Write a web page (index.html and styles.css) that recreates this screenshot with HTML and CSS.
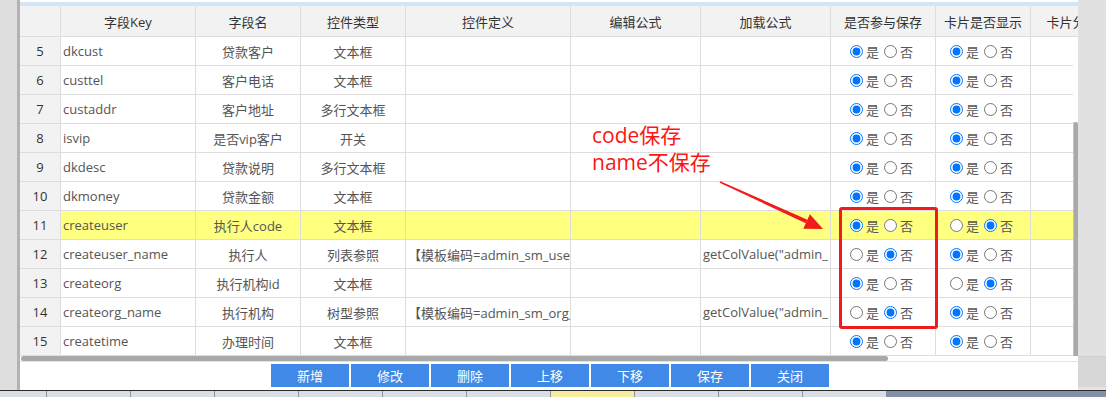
FILE: index.html
```html
<!DOCTYPE html>
<html lang="zh-CN">
<head>
    <meta charset="UTF-8">
    <title>字段设置</title>
    <link rel="stylesheet" href="styles.css">
</head>
<body>
    <div class="screen">
        <div class="side-left"></div>
        <div class="panel">
            <div class="top-band"></div>
            <div class="grid head">
                <div class="cell num"></div>
                <div class="cell">字段Key</div>
                <div class="cell">字段名</div>
                <div class="cell">控件类型</div>
                <div class="cell">控件定义</div>
                <div class="cell">编辑公式</div>
                <div class="cell">加载公式</div>
                <div class="cell">是否参与保存</div>
                <div class="cell">卡片是否显示</div>
                <div class="cell">卡片分组</div>
            </div>
            <div class="body">
                <div class="rows">
                    <div class="grid row">
                        <div class="cell num">5</div>
                        <div class="cell left">dkcust</div>
                        <div class="cell">贷款客户</div>
                        <div class="cell">文本框</div>
                        <div class="cell left"></div>
                        <div class="cell"></div>
                        <div class="cell left"></div>
                        <div class="cell opt"><input type="radio" name="s5" checked><span>是</span><input type="radio" name="s5"><span>否</span></div>
                        <div class="cell opt"><input type="radio" name="c5" checked><span>是</span><input type="radio" name="c5"><span>否</span></div>
                        <div class="cell"></div>
                    </div>
                    <div class="grid row">
                        <div class="cell num">6</div>
                        <div class="cell left">custtel</div>
                        <div class="cell">客户电话</div>
                        <div class="cell">文本框</div>
                        <div class="cell left"></div>
                        <div class="cell"></div>
                        <div class="cell left"></div>
                        <div class="cell opt"><input type="radio" name="s6" checked><span>是</span><input type="radio" name="s6"><span>否</span></div>
                        <div class="cell opt"><input type="radio" name="c6" checked><span>是</span><input type="radio" name="c6"><span>否</span></div>
                        <div class="cell"></div>
                    </div>
                    <div class="grid row">
                        <div class="cell num">7</div>
                        <div class="cell left">custaddr</div>
                        <div class="cell">客户地址</div>
                        <div class="cell">多行文本框</div>
                        <div class="cell left"></div>
                        <div class="cell"></div>
                        <div class="cell left"></div>
                        <div class="cell opt"><input type="radio" name="s7" checked><span>是</span><input type="radio" name="s7"><span>否</span></div>
                        <div class="cell opt"><input type="radio" name="c7" checked><span>是</span><input type="radio" name="c7"><span>否</span></div>
                        <div class="cell"></div>
                    </div>
                    <div class="grid row">
                        <div class="cell num">8</div>
                        <div class="cell left">isvip</div>
                        <div class="cell">是否vip客户</div>
                        <div class="cell">开关</div>
                        <div class="cell left"></div>
                        <div class="cell"></div>
                        <div class="cell left"></div>
                        <div class="cell opt"><input type="radio" name="s8" checked><span>是</span><input type="radio" name="s8"><span>否</span></div>
                        <div class="cell opt"><input type="radio" name="c8" checked><span>是</span><input type="radio" name="c8"><span>否</span></div>
                        <div class="cell"></div>
                    </div>
                    <div class="grid row">
                        <div class="cell num">9</div>
                        <div class="cell left">dkdesc</div>
                        <div class="cell">贷款说明</div>
                        <div class="cell">多行文本框</div>
                        <div class="cell left"></div>
                        <div class="cell"></div>
                        <div class="cell left"></div>
                        <div class="cell opt"><input type="radio" name="s9" checked><span>是</span><input type="radio" name="s9"><span>否</span></div>
                        <div class="cell opt"><input type="radio" name="c9" checked><span>是</span><input type="radio" name="c9"><span>否</span></div>
                        <div class="cell"></div>
                    </div>
                    <div class="grid row">
                        <div class="cell num">10</div>
                        <div class="cell left">dkmoney</div>
                        <div class="cell">贷款金额</div>
                        <div class="cell">文本框</div>
                        <div class="cell left"></div>
                        <div class="cell"></div>
                        <div class="cell left"></div>
                        <div class="cell opt"><input type="radio" name="s10" checked><span>是</span><input type="radio" name="s10"><span>否</span></div>
                        <div class="cell opt"><input type="radio" name="c10" checked><span>是</span><input type="radio" name="c10"><span>否</span></div>
                        <div class="cell"></div>
                    </div>
                    <div class="grid row active">
                        <div class="cell num">11</div>
                        <div class="cell left">createuser</div>
                        <div class="cell">执行人code</div>
                        <div class="cell">文本框</div>
                        <div class="cell left"></div>
                        <div class="cell"></div>
                        <div class="cell left"></div>
                        <div class="cell opt"><input type="radio" name="s11" checked><span>是</span><input type="radio" name="s11"><span>否</span></div>
                        <div class="cell opt"><input type="radio" name="c11"><span>是</span><input type="radio" name="c11" checked><span>否</span></div>
                        <div class="cell"></div>
                    </div>
                    <div class="grid row">
                        <div class="cell num">12</div>
                        <div class="cell left">createuser_name</div>
                        <div class="cell">执行人</div>
                        <div class="cell">列表参照</div>
                        <div class="cell left">【模板编码=admin_sm_user_ref】</div>
                        <div class="cell"></div>
                        <div class="cell left">getColValue("admin_ sm_user","user_name")</div>
                        <div class="cell opt"><input type="radio" name="s12"><span>是</span><input type="radio" name="s12" checked><span>否</span></div>
                        <div class="cell opt"><input type="radio" name="c12" checked><span>是</span><input type="radio" name="c12"><span>否</span></div>
                        <div class="cell"></div>
                    </div>
                    <div class="grid row">
                        <div class="cell num">13</div>
                        <div class="cell left">createorg</div>
                        <div class="cell">执行机构id</div>
                        <div class="cell">文本框</div>
                        <div class="cell left"></div>
                        <div class="cell"></div>
                        <div class="cell left"></div>
                        <div class="cell opt"><input type="radio" name="s13" checked><span>是</span><input type="radio" name="s13"><span>否</span></div>
                        <div class="cell opt"><input type="radio" name="c13"><span>是</span><input type="radio" name="c13" checked><span>否</span></div>
                        <div class="cell"></div>
                    </div>
                    <div class="grid row">
                        <div class="cell num">14</div>
                        <div class="cell left">createorg_name</div>
                        <div class="cell">执行机构</div>
                        <div class="cell">树型参照</div>
                        <div class="cell left">【模板编码=admin_sm_org_ref】</div>
                        <div class="cell"></div>
                        <div class="cell left">getColValue("admin_ sm_org","org_name")</div>
                        <div class="cell opt"><input type="radio" name="s14"><span>是</span><input type="radio" name="s14" checked><span>否</span></div>
                        <div class="cell opt"><input type="radio" name="c14" checked><span>是</span><input type="radio" name="c14"><span>否</span></div>
                        <div class="cell"></div>
                    </div>
                    <div class="grid row">
                        <div class="cell num">15</div>
                        <div class="cell left">createtime</div>
                        <div class="cell">办理时间</div>
                        <div class="cell">文本框</div>
                        <div class="cell left"></div>
                        <div class="cell"></div>
                        <div class="cell left"></div>
                        <div class="cell opt"><input type="radio" name="s15" checked><span>是</span><input type="radio" name="s15"><span>否</span></div>
                        <div class="cell opt"><input type="radio" name="c15" checked><span>是</span><input type="radio" name="c15"><span>否</span></div>
                        <div class="cell"></div>
                    </div>
                </div>
                <div class="vscroll"><div class="vthumb"></div></div>
            </div>
            <div class="hscroll"><div class="hthumb"></div></div>
            <div class="toolbar">
                <button>新增</button>
                <button>修改</button>
                <button>删除</button>
                <button>上移</button>
                <button>下移</button>
                <button>保存</button>
                <button>关闭</button>
            </div>
        </div>
        <div class="side-right">
            <div class="side-top"></div>
            <div class="side-bottom"></div>
        </div>
    </div>
    <div class="taskbar">
        <div class="tab first"></div>
        <div class="tab"></div>
        <div class="tab"></div>
        <div class="tab"></div>
        <div class="tab"></div>
        <div class="tab"></div>
        <div class="tab"></div>
        <div class="tab current"></div>
        <div class="tab"></div>
        <div class="tab"></div>
        <div class="tab"></div>
    </div>

    <!-- annotation drawn over the grid -->
    <div class="note">code保存<br>name不保存</div>
    <svg class="arrow" width="150" height="70" viewBox="0 0 150 70">
        <polygon points="19.7,12.7 20.3,11.3 107.4,49.7 105.8,53.3" fill="#f21b1b"/>
        <polygon points="123,59 103.3,58.8 109.9,44.2" fill="#f21b1b"/>
    </svg>
    <div class="mark"></div>
</body>
</html>
```

FILE: styles.css
```css
body {
    margin: 0;
    font-family: "Open Sans", "Noto Sans CJK SC", sans-serif;
    font-size: 13px;
    color: #555;
    background-color: #fff;
    overflow: hidden;
}

.screen {
    display: flex;
    height: 390px;
}

.side-left {
    width: 17px;
    background-color: #dedede;
    border-right: 3px solid #b3b3b3;
}

.panel {
    width: 1058px;
    display: flex;
    flex-direction: column;
    background-color: #fff;
}

.side-right {
    flex: 1;
    display: flex;
    flex-direction: column;
}

.side-top {
    height: 356px;
    background-color: #e1e1e1;
}

.side-bottom {
    flex: 1;
    background-color: #d7d7d7;
    border-top: 1px solid #cfcfcf;
    border-bottom: 3px solid #e4e4e4;
}

.top-band {
    height: 6px;
    background: linear-gradient(#fff 0 2px, #d3e5f6 2px);
}

.grid {
    display: grid;
    grid-template-columns: 41px 135px 105px 105px 165px 130px 130px 105px 95px 84px;
}

.head {
    height: 31px;
    overflow: hidden;
    background-color: #f2f2f2;
    color: #333;
}

.cell {
    box-sizing: border-box;
    display: flex;
    align-items: center;
    justify-content: center;
    border-right: 1px solid #ddd;
    border-bottom: 1px solid #ddd;
    white-space: nowrap;
    overflow: hidden;
}

.cell.left {
    justify-content: flex-start;
    padding-left: 2px;
}

.cell.num {
    background-color: #f2f2f2;
    color: #333;
}

.cell.opt {
    padding-right: 8px;
}

.cell.opt input {
    width: 13px;
    height: 13px;
    margin: 0 3px 0 5px;
}

.body {
    display: flex;
    height: 319px;
}

.rows {
    width: 1053px;
    overflow: hidden;
}

.row {
    height: 29px;
}

.row.active .cell {
    background-color: #ffff80;
}

.row.active .cell.num {
    background-color: #f2f2f2;
}

.vscroll {
    width: 5px;
    padding-top: 85px;
    box-sizing: border-box;
}

.vthumb {
    height: 100%;
    background-color: #a9a9a9;
    border-left: 1px solid #c4c4c4;
    border-radius: 2px 2px 0 0;
}

.hscroll {
    height: 5px;
    padding-left: 1px;
}

.hthumb {
    width: 867px;
    height: 5px;
    background-color: #a8a8a8;
    border-radius: 3px;
}

.toolbar {
    flex: 1;
    display: flex;
    justify-content: center;
    align-items: flex-start;
    gap: 2px;
    padding: 2px 0 0 2px;
    border-top: 1px solid #e3e3e3;
}

.toolbar button {
    width: 78px;
    height: 23px;
    padding: 0;
    border: none;
    background-color: #4189e6;
    color: #fff;
    font-family: "Open Sans", "Noto Sans CJK SC", sans-serif;
    font-size: 13px;
}

.taskbar {
    display: flex;
    height: 6px;
    border-top: 1px solid #2b2b2b;
    background-color: #8391a8;
}

.tab {
    width: 83px;
    background-color: #dadee5;
    border-right: 1px solid #8b919c;
}

.tab.first {
    width: 46px;
}

.tab.current {
    background-color: #f6ee9e;
}

.note {
    position: absolute;
    left: 592px;
    top: 122px;
    font-size: 21px;
    line-height: 27px;
    color: #ff1414;
}

.arrow {
    position: absolute;
    left: 700px;
    top: 170px;
}

.mark {
    position: absolute;
    left: 839px;
    top: 207px;
    width: 99px;
    height: 122px;
    box-sizing: border-box;
    border: 3px solid #f21b1b;
    border-radius: 3px;
}
```
